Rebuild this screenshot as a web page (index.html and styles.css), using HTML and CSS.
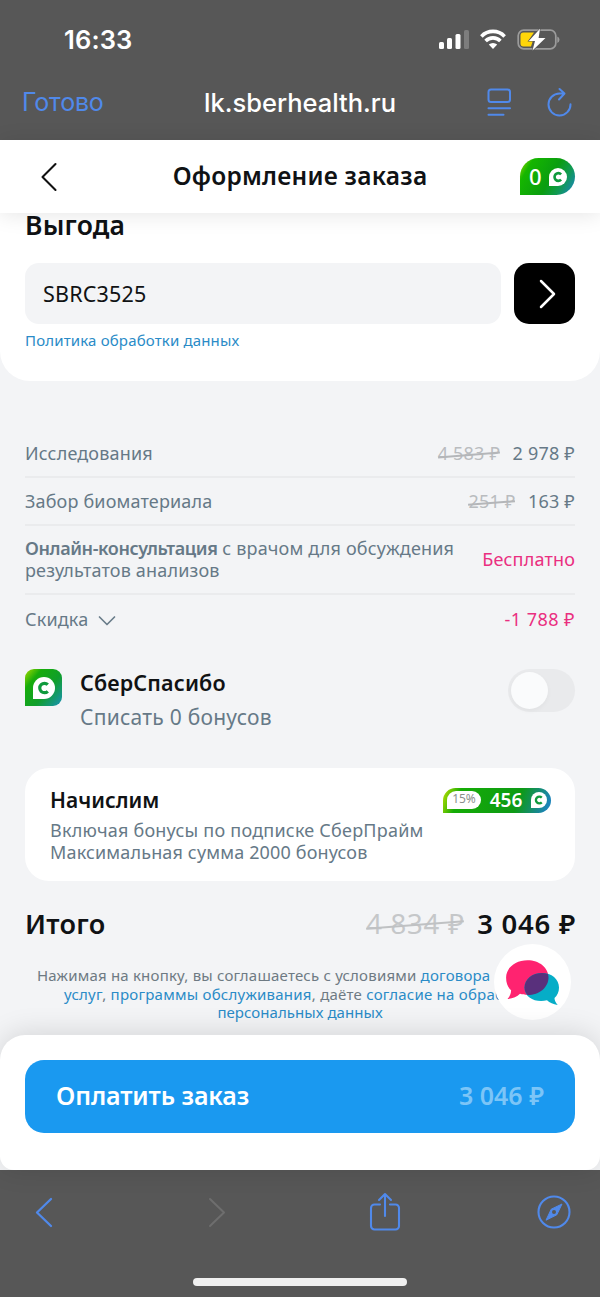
FILE: index.html
```html
<!DOCTYPE html>
<html lang="ru">
<head>
<meta charset="utf-8">
<title>Оформление заказа</title>
<link rel="stylesheet" href="styles.css">
</head>
<body>
<svg class="defs" width="0" height="0" aria-hidden="true">
  <defs>
    <symbol id="bonus" viewBox="0 0 22 22">
      <path fill="#fff" d="M0 22V11A11 11 0 1 1 11 22Z"/>
      <path fill="none" stroke="#0f9a3c" stroke-width="3.200" d="M14.800 7.700A4.700 4.700 0 1 0 14.800 14.300"/>
    </symbol>
  </defs>
</svg>
<div class="phone">
  <div class="browser-top">
    <div class="status">
      <span class="time">16:33</span>
      <svg class="status-icons" width="122" height="24" viewBox="0 0 122 24">
        <g fill="#fff">
          <rect x="1" y="14" width="5" height="7" rx="1.5"/>
          <rect x="9" y="10" width="5" height="11" rx="1.5"/>
          <rect x="17.5" y="6" width="5" height="15" rx="1.5"/>
          <rect x="26" y="2" width="5" height="19" rx="1.5" fill="#7d7d7d"/>
        </g>
        <g fill="none" stroke="#fff" stroke-width="3.6">
          <path d="M43.4 8.4a16 16 0 0 1 23.2 0"/>
          <path d="M47.6 13a10.4 10.4 0 0 1 14.8 0"/>
        </g>
        <path fill="#fff" d="M55 21l-4.2-4.4a6 6 0 0 1 8.400 0z"/>
        <rect x="80.2" y="2.2" width="37.600" height="18.600" rx="5.5" fill="none" stroke="#9b9b9b" stroke-width="1.7"/>
        <path fill="#ffd60a" d="M85.5 4.5H96L90.500 12.500H95L93 18.500H85.500a3 3 0 0 1-3-3V7.500a3 3 0 0 1 3-3z"/>
        <path fill="#9b9b9b" d="M119.300 8.500q2.200 1 2.200 3.200t-2.200 3.200z"/>
        <path fill="#fff" stroke="#575757" stroke-width="1.2" paint-order="stroke" d="M102 .8L90.800 13h6.200L94.500 22.600 107.500 10H100.600z"/>
      </svg>
    </div>
    <div class="address">
      <span class="done">Готово</span>
      <span class="url">lk.sberhealth.ru</span>
      <svg class="nav-icons" width="86" height="32" viewBox="0 0 86 32" fill="none" stroke="#5089ea" stroke-width="2" stroke-linecap="round" stroke-linejoin="round">
        <rect x="2.500" y="3.500" width="21.500" height="12.500" rx="2.500"/>
        <path d="M2.500 22.300h21.500M2.500 28.800h15"/>
        <path d="M84.500 18.300A11 11 0 1 1 73.500 7.500h4.500M73.500 3l5 4.500-5.500 6"/>
      </svg>
    </div>
  </div>

  <header class="header">
    <svg class="back" width="20" height="30" viewBox="0 0 20 30" fill="none" stroke="#111" stroke-width="2.100" stroke-linecap="round" stroke-linejoin="round"><path d="M15.500 2L2.500 15l13 13"/></svg>
    <h1 class="title">Оформление заказа</h1>
    <span class="balance"><span class="balance-value">0</span><svg width="18" height="18"><use href="#bonus"/></svg></span>
  </header>

  <section class="benefit">
    <h2 class="benefit-title">Выгода</h2>
    <div class="promo">
      <div class="promo-input">SBRC3525</div>
      <div class="promo-button"><svg width="20" height="32" viewBox="0 0 20 32" fill="none" stroke="#fff" stroke-width="2.500" stroke-linecap="round" stroke-linejoin="round"><path d="M3 3l13 13L3 29"/></svg></div>
    </div>
    <a class="policy">Политика обработки данных</a>
  </section>

  <main class="order">
    <div class="row">
      <span>Исследования</span>
      <span class="prices"><s class="old">4 583 ₽</s><span>2 978 ₽</span></span>
    </div>
    <div class="row">
      <span>Забор биоматериала</span>
      <span class="prices"><s class="old">251 ₽</s><span>163 ₽</span></span>
    </div>
    <div class="row tall">
      <span><b class="consult">Онлайн-консультация</b> с врачом для обсуждения<br>результатов анализов</span>
      <span class="pink">Бесплатно</span>
    </div>
    <div class="row last">
      <span class="discount">Скидка <svg width="18" height="12" viewBox="0 0 18 12" fill="none" stroke="#6a7d8b" stroke-width="1.700" stroke-linecap="round" stroke-linejoin="round"><path d="M1.500 3L9 10.500 16.500 3"/></svg></span>
      <span class="pink minus">-1 788 ₽</span>
    </div>

    <div class="spasibo">
      <span class="spasibo-icon"><svg width="22" height="22"><use href="#bonus"/></svg></span>
      <div class="spasibo-text">
        <div class="spasibo-name">СберСпасибо</div>
        <div class="spasibo-sub">Списать 0 бонусов</div>
      </div>
      <span class="toggle"></span>
    </div>

    <div class="card">
      <div class="card-head">
        <span class="card-title">Начислим</span>
        <span class="reward"><span class="percent">15%</span><span class="amount">456</span><svg width="16" height="16"><use href="#bonus"/></svg></span>
      </div>
      <p class="card-text">Включая бонусы по подписке СберПрайм<br><span class="max">Максимальная сумма 2000 бонусов</span></p>
    </div>

    <div class="total">
      <span class="total-label">Итого</span>
      <span class="prices"><s class="old">4 834 ₽</s><span class="total-sum">3 046 ₽</span></span>
    </div>

    <div class="legal">
      <div class="legal-1">Нажимая на кнопку, вы соглашаетесь с условиями <a>договора</a></div>
      <div class="legal-2"><a>услуг</a>, <a>программы обслуживания</a>, даёте <a>согласие на обработку</a></div>
      <div class="legal-3"><a>персональных данных</a></div>
    </div>
    <div class="chat"><svg width="76" height="76" viewBox="0 0 76 76">
      <path fill="#ff2370" d="M32.500 16.200c12 0 21 7.500 21 17.200s-9 17.500-21 17.500c-2.800 0-5-.4-7.500-1.200-3 3-7 4.800-12.500 5.300 2-2.300 3.500-5 3.600-8.700-3.500-3.300-5-7.500-5-12.900 0-9.700 9.500-17.200 21.400-17.200z"/>
      <path fill="#06adc7" d="M47 29c9.500 0 17 6 17 14.500 0 4.700-1.700 8-4.500 10.500 0 2.500 1.200 4.700 3.200 7-4.500-.8-8-2.300-10.700-4.700-10.500 2.700-22.500-2-22.500-12.800C29.500 35 37.500 29 47 29z"/>
      <path fill="#59307c" d="M47 29c2 0 4 .3 5.900 1 .4 1.300.6 2.300.6 3.400 0 9.700-9 17.500-21 17.500-2-2.100-3-4.600-3-7.400C29.500 35 37.500 29 47 29z"/>
    </svg></div>
  </main>

  <footer class="pay">
    <div class="pay-button"><span class="pay-label">Оплатить заказ</span><span class="pay-sum">3 046 ₽</span></div>
  </footer>

  <div class="browser-bottom">
    <div class="tools">
      <svg width="20" height="32" viewBox="0 0 20 32" fill="none" stroke="#5089ea" stroke-width="2.300" stroke-linecap="round" stroke-linejoin="round"><path d="M16 3L2 16.500 16 30"/></svg>
      <svg class="forward" width="20" height="32" viewBox="0 0 20 32" fill="none" stroke="#6e6e6e" stroke-width="2" stroke-linecap="round" stroke-linejoin="round"><path d="M3 3l14 13.500L3 30"/></svg>
      <svg class="share" width="32" height="40" viewBox="0 0 32 40" fill="none" stroke="#5089ea" stroke-width="2.100" stroke-linecap="round" stroke-linejoin="round"><path d="M11 12.500H5.500a3.500 3.500 0 0 0-3.500 3.500v18a3.500 3.500 0 0 0 3.500 3.500h21a3.500 3.500 0 0 0 3.500-3.500V16a3.500 3.500 0 0 0-3.500-3.500H21M16 24V2.500M10 8l6-6 6 6"/></svg>
      <svg width="36" height="36" viewBox="0 0 36 36"><circle cx="18" cy="18" r="15.500" fill="none" stroke="#5089ea" stroke-width="2.100"/><path fill="#5089ea" stroke="#5089ea" stroke-linejoin="round" d="M26 10L20.800 20.800 10 26.200 15.200 15.200z"/><circle cx="18" cy="18" r="2" fill="#575757"/></svg>
    </div>
    <div class="home"></div>
  </div>
</div>
</body>
</html>
```
FILE: styles.css
```css
* { box-sizing: border-box; }
body { margin: 0; }
h1, h2, p { margin: 0; font-weight: 600; }
svg { display: block; flex: none; }
.defs { position: absolute; }
.phone {
  width: 600px;
  height: 1297px;
  overflow: hidden;
  display: flex;
  flex-direction: column;
  background: #f3f4f6;
  color: #101214;
  font-family: "Noto Sans", "Open Sans", sans-serif;
  white-space: nowrap;
}

.browser-top { height: 140px; flex: none; background: #575757; color: #fff; font-family: Inter, sans-serif; }
.status { height: 78px; padding: 2px 40px 0 64px; display: flex; align-items: center; justify-content: space-between; }
.time { font-size: 25.500px; font-weight: 600; line-height: 30px; letter-spacing: .15px; }
.address { height: 47px; padding: 1px 28px 0 22px; display: grid; grid-template-columns: 147px 1fr 146px; align-items: center; }
.done { font-size: 25px; letter-spacing: -.2px; color: #5089ea; }
.url { padding-left: 5px; font-size: 25.500px; font-weight: 500; text-align: center; }
.nav-icons { justify-self: end; }

.header {
  height: 73px;
  flex: none;
  padding: 0 25px;
  display: grid;
  grid-template-columns: 80px 1fr 80px;
  align-items: center;
  background: #fff;
  box-shadow: 0 2px 20px rgba(0, 0, 0, .1);
  z-index: 1;
}
.back { margin-left: 15px; }
.title { padding-bottom: 2px; font-size: 24.500px; line-height: 32px; letter-spacing: .25px; text-align: center; }
.balance {
  width: 55px;
  height: 37px;
  justify-self: end;
  padding-left: 9px;
  display: flex;
  align-items: center;
  gap: 7px;
  border-radius: 19px 19px 19px 0;
  background: linear-gradient(120deg, #a5dc00 0, #15b600 18%, #0a9d10 55%, #109a52 75%, #1b83cc 100%);
  color: #fff;
}
.balance-value { padding-bottom: 2px; font-size: 22px; font-weight: 500; line-height: 28px; }

.benefit { height: 168px; flex: none; padding: 0 25px; background: #fff; border-radius: 0 0 30px 30px; }
.benefit-title { height: 50px; font-size: 26.500px; line-height: 25px; letter-spacing: .2px; }
.promo { display: flex; gap: 13px; height: 61px; }
.promo-input { flex: 1; padding-left: 18px; background: #f3f4f6; border-radius: 14px; font-size: 21.500px; line-height: 62px; letter-spacing: .2px; }
.promo-button { width: 61px; display: flex; align-items: center; justify-content: center; padding-left: 6px; background: #000; border-radius: 15px; }
.policy { display: block; margin-top: 5px; font-size: 15px; line-height: 22px; letter-spacing: .16px; color: #2a8bc7; }

.order { flex: 1; position: relative; padding: 49px 25px 0; }
.row {
  height: 48px;
  padding-top: 2px;
  display: flex;
  align-items: center;
  justify-content: space-between;
  border-bottom: 2px solid #eaebed;
  color: #667987;
  font-size: 18px;
  line-height: 21.500px;
  letter-spacing: .16px;
}
.row.tall { height: 69px; padding-top: 0; }
.row.last { border: 0; height: 50px; padding-top: 0; }
.consult { font-weight: 600; letter-spacing: -.4px; }
.discount { display: flex; align-items: center; gap: 10px; }
.prices { display: flex; gap: 12.500px; }
.row .prices { letter-spacing: .2px; }
.minus { letter-spacing: .45px; }
.old { position: relative; color: #b9bcbf; text-decoration: none; }
.old::after { content: ""; position: absolute; left: 0; right: 0; top: 50%; height: 1.500px; background: #b4b6b9; transform: rotate(-4.500deg); }
.pink { color: #ea2f80; }

.spasibo { height: 69px; margin-top: 24px; display: flex; }
.spasibo-icon {
  width: 37px;
  height: 37px;
  display: flex;
  align-items: center;
  justify-content: center;
  border-radius: 9px 9px 9px 0;
  background: linear-gradient(130deg, #a5dc00 0, #17ac0b 25%, #109e2c 60%, #1992b8 100%);
}
.spasibo-text { flex: 1; padding-left: 18px; }
.spasibo-name { font-size: 21.500px; font-weight: 600; line-height: 28px; letter-spacing: .15px; }
.spasibo-sub { margin-top: 6px; font-size: 21px; line-height: 28px; letter-spacing: .25px; color: #667987; }
.toggle { width: 67px; height: 43px; padding: 3px; border-radius: 22px; background: #e9eaec; }
.toggle::before { content: ""; display: block; width: 37px; height: 37px; border-radius: 50%; background: #fafbfc; box-shadow: 0 2px 5px rgba(0, 0, 0, .04); }

.card { height: 113px; margin-top: 30px; padding: 17px 24px 0 25px; border-radius: 24px; background: #fff; }
.card-head { height: 30px; display: flex; align-items: center; justify-content: space-between; }
.card-title { font-size: 21px; font-weight: 600; }
.card-text { margin-top: 5px; font-size: 18px; font-weight: 400; line-height: 21.500px; letter-spacing: .22px; color: #667987; }
.max { letter-spacing: .15px; }
.reward {
  width: 108px;
  height: 25px;
  padding: 0 4px 0 4px;
  display: flex;
  align-items: center;
  justify-content: space-between;
  border-radius: 13px 13px 13px 0;
  background: linear-gradient(110deg, #bfe000 0, #15ac06 16%, #0d9a15 68%, #1b83b8 95%);
  color: #fff;
}
.percent { width: 34px; height: 18px; border-radius: 9px 9px 9px 0; background: #fff; color: #8a8f8c; font-size: 12px; line-height: 16px; text-align: center; }
.amount { font-size: 19px; font-weight: 600; }

.total { height: 40px; margin-top: 23px; display: flex; align-items: center; justify-content: space-between; font-size: 27.500px; line-height: 36px; letter-spacing: .75px; }
.total .prices { margin-right: -1px; }
.total-label, .total-sum { font-weight: 600; }
.total-label { font-size: 27px; letter-spacing: .3px; }
.total .old { color: #c5c7c9; }
.total .old::after { background: #bfc1c3; height: 2px; }
.legal { margin-top: 22px; color: #6e7a83; font-size: 15px; line-height: 18.500px; letter-spacing: .2px; }
.legal a { color: #2a8bc7; }
.legal-1 { padding-left: 12px; }
.legal-2 { padding-left: 39px; letter-spacing: .24px; }
.legal-3 { text-align: center; letter-spacing: .05px; }
.chat { position: absolute; left: 494px; top: 563px; width: 77px; height: 76px; padding-left: 1px; border-radius: 50%; background: #fff; }

.pay {
  height: 135px;
  flex: none;
  padding: 25px;
  border-radius: 25px 25px 14px 14px;
  background: #fff;
  box-shadow: 0 -2px 28px rgba(0, 0, 0, .13);
  z-index: 1;
}
.pay-button { height: 73px; padding: 0 31px 3px; display: flex; align-items: center; justify-content: space-between; border-radius: 19px; background: #1a99f0; color: #fff; font-size: 25px; font-weight: 600; }
.pay-label { letter-spacing: -.1px; }
.pay-sum { color: #7cc5f7; }

.browser-bottom { height: 127px; flex: none; background: #575757; }
.tools { height: 83px; padding: 0 28px 0 35px; display: grid; grid-template-columns: 172px 162px 1fr auto; align-items: center; }
.home { width: 214px; height: 8px; margin: 25px auto 0; border-radius: 4px; background: #f0f0f0; }
```
